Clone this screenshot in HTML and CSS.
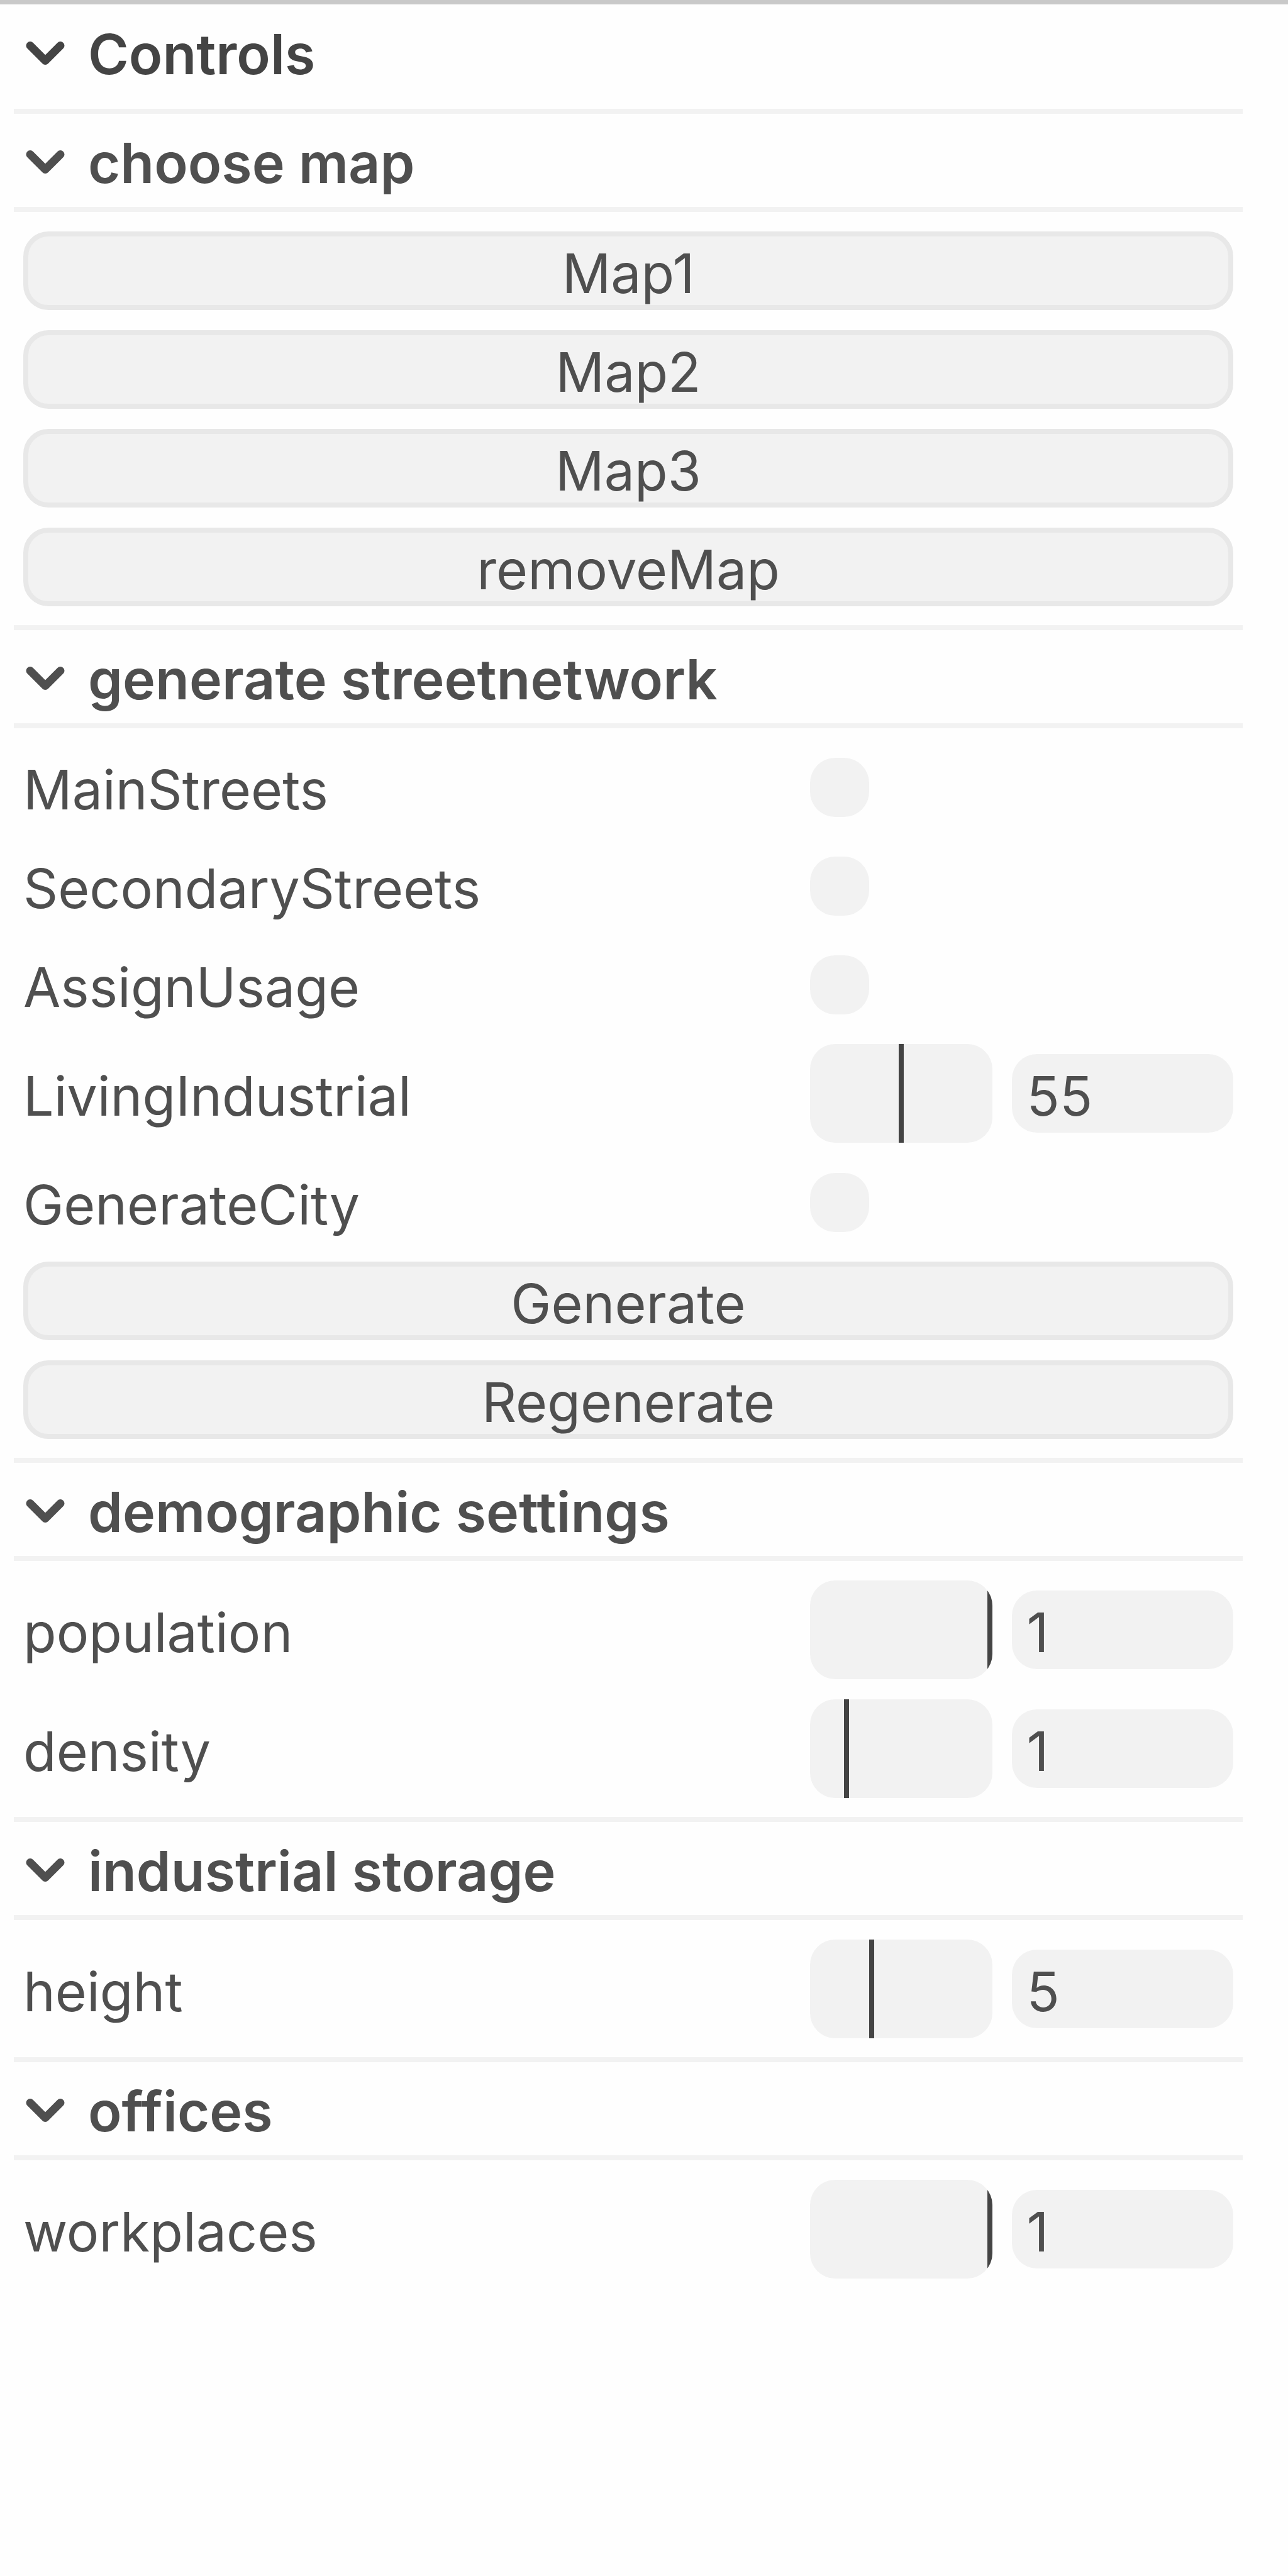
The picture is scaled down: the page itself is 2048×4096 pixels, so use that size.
FILE: index.html
```html
<!DOCTYPE html>
<html lang="en">
<head>
<meta charset="utf-8">
<title>Controls</title>
<link rel="stylesheet" href="styles.css">
</head>
<body>
<svg class="defs" aria-hidden="true"><symbol id="chevron" viewBox="0 0 70 44"><path d="M11 8.500L35 32.500L59 8.500" fill="none" stroke="currentColor" stroke-width="13" stroke-linecap="round" stroke-linejoin="round"/></symbol></svg>
<main class="panel">
  <button class="title title-root" type="button" aria-expanded="true"><svg class="chevron"><use href="#chevron"/></svg>Controls</button>

  <section class="folder">
    <button class="title" type="button" aria-expanded="true"><svg class="chevron"><use href="#chevron"/></svg>choose map</button>
    <div class="rows">
      <button class="action" type="button">Map1</button>
      <button class="action" type="button">Map2</button>
      <button class="action" type="button">Map3</button>
      <button class="action" type="button">removeMap</button>
    </div>
  </section>

  <section class="folder">
    <button class="title" type="button" aria-expanded="true"><svg class="chevron"><use href="#chevron"/></svg>generate streetnetwork</button>
    <div class="rows">
      <div class="row"><label class="name" for="main-streets">MainStreets</label><div class="widget"><input class="check" type="checkbox" id="main-streets"></div></div>
      <div class="row"><label class="name" for="secondary-streets">SecondaryStreets</label><div class="widget"><input class="check" type="checkbox" id="secondary-streets"></div></div>
      <div class="row"><label class="name" for="assign-usage">AssignUsage</label><div class="widget"><input class="check" type="checkbox" id="assign-usage"></div></div>
      <div class="row"><label class="name" for="living">LivingIndustrial</label><div class="widget"><div class="slider"><input class="range" type="range" min="10" max="100" value="55" aria-label="LivingIndustrial"></div><input class="number" type="text" id="living" value="55"></div></div>
      <div class="row"><label class="name" for="generate-city">GenerateCity</label><div class="widget"><input class="check" type="checkbox" id="generate-city"></div></div>
      <button class="action" type="button">Generate</button>
      <button class="action" type="button">Regenerate</button>
    </div>
  </section>

  <section class="folder">
    <button class="title" type="button" aria-expanded="true"><svg class="chevron"><use href="#chevron"/></svg>demographic settings</button>
    <div class="rows">
      <div class="row"><label class="name" for="population">population</label><div class="widget"><div class="slider"><input class="range" type="range" min="0" max="1" step="any" value="1" aria-label="population"></div><input class="number" type="text" id="population" value="1"></div></div>
      <div class="row"><label class="name" for="density">density</label><div class="widget"><div class="slider"><input class="range" type="range" min="0" max="5.2" step="any" value="1" aria-label="density"></div><input class="number" type="text" id="density" value="1"></div></div>
    </div>
  </section>

  <section class="folder">
    <button class="title" type="button" aria-expanded="true"><svg class="chevron"><use href="#chevron"/></svg>industrial storage</button>
    <div class="rows">
      <div class="row"><label class="name" for="height">height</label><div class="widget"><div class="slider"><input class="range" type="range" min="0" max="15" step="any" value="5" aria-label="height"></div><input class="number" type="text" id="height" value="5"></div></div>
    </div>
  </section>

  <section class="folder">
    <button class="title" type="button" aria-expanded="true"><svg class="chevron"><use href="#chevron"/></svg>offices</button>
    <div class="rows">
      <div class="row"><label class="name" for="workplaces">workplaces</label><div class="widget"><div class="slider"><input class="range" type="range" min="0" max="1" step="any" value="1" aria-label="workplaces"></div><input class="number" type="text" id="workplaces" value="1"></div></div>
    </div>
  </section>
</main>
</body>
</html>
```

FILE: styles.css
```css
:root {
  --text: #4f4f4f;
  --text-strong: #444;
  --widget: #f2f2f2;
  --edge: #e8e8e8;
  --line: #f2f2f2;
}

* {
  box-sizing: border-box;
}

body {
  margin: 0;
  min-height: 100vh;
  background: #fefefe;
  border-top: 7px solid #c9c9c9;
  color: var(--text);
  font: 400 86px/100px Inter, "Liberation Sans", sans-serif;
  font-variant-ligatures: none;
}

button,
input {
  margin: 0;
  font: inherit;
  font-variant-ligatures: none;
  color: inherit;
}

.defs {
  display: none;
}

.panel {
  padding: 0 72px 0 22px;
}

.title {
  display: flex;
  align-items: center;
  gap: 33px;
  width: 100%;
  height: 148px;
  padding: 8px 15px 0;
  border: 0;
  background: none;
  font-size: 88px;
  font-weight: 600;
  text-align: left;
}

.title-root {
  height: 166px;
  padding-top: 0;
  padding-bottom: 8px;
  color: var(--text-strong);
}

.chevron {
  flex: none;
  width: 70px;
  height: 44px;
}

.folder {
  border-top: 8px solid var(--line);
}

.rows {
  display: flex;
  flex-direction: column;
  gap: 32px;
  padding: 31px 15px 30px;
  border-top: 8px solid var(--line);
}

.folder:last-child .rows {
  padding-bottom: 0;
}

.row {
  display: flex;
  align-items: center;
  min-height: 125px;
}

.name {
  flex: 1;
  padding-top: 8px;
}

.widget {
  flex: 0 0 35%;
  min-width: 0;
  display: flex;
  align-items: center;
  gap: 31px;
}

.action {
  width: 100%;
  height: 125px;
  padding: 8px 0 0;
  border: 8px solid var(--edge);
  border-radius: 40px;
  background: var(--widget);
}

.check {
  appearance: none;
  width: 94px;
  height: 94px;
  border-radius: 40px;
  background: var(--widget);
}

.slider {
  flex: 0 0 290px;
  height: 157px;
  border-radius: 40px;
  overflow: hidden;
  background: var(--widget);
}

.range {
  appearance: none;
  display: block;
  width: 100%;
  height: 100%;
  background: none;
}

.range::-webkit-slider-thumb {
  appearance: none;
  width: 8px;
  height: 157px;
  border: 0;
  border-radius: 0;
  background: var(--text-strong);
}

.number {
  flex: 1;
  width: 0;
  min-width: 0;
  height: 125px;
  padding: 8px 24px 0;
  border: 0;
  border-radius: 40px;
  background: var(--widget);
}
```
